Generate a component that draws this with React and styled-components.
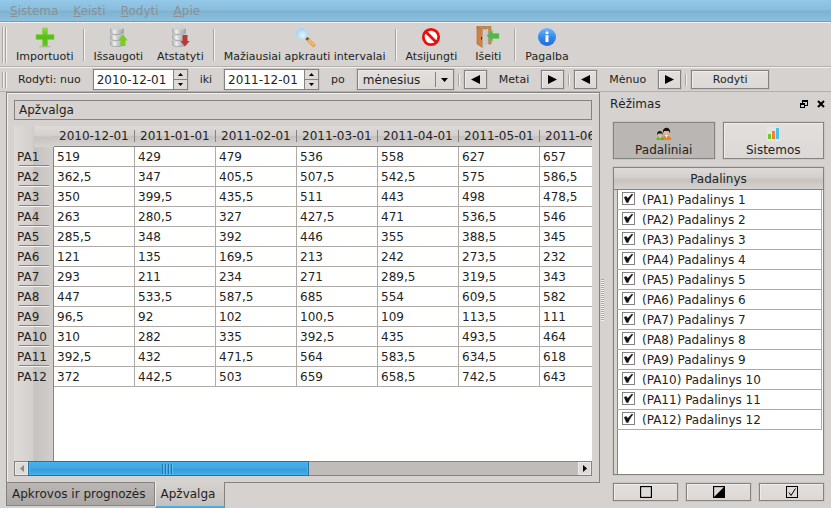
import React, { useState } from "react";
import styled, { createGlobalStyle, css } from "styled-components";

const GlobalStyle = createGlobalStyle`
  *, *::before, *::after { box-sizing: border-box; }
  body { margin: 0; background: #d6d2cf; }
  body, button, input, select, table {
    font-family: "DejaVu Sans", sans-serif;
    font-size: 12px;
    line-height: 16px;
    color: #221f1e;
  }
  button { margin: 0; padding: 0; }
`;

const Window = styled.div`
  min-height: 100vh;
  display: flex;
  flex-direction: column;
  overflow: hidden;
  background: #d6d2cf;
`;

const MenuBar = styled.nav`
  display: flex;
  gap: 15px;
  height: 22px;
  padding: 0 10px;
  background: linear-gradient(#93c8e9 0%, #89bddc 48%, #7fb2cf 52%, #8cc0df 100%);
  border-bottom: 1px solid #769caf;
`;

const MenuItem = styled.button`
  padding: 0;
  border: 0;
  background: none;
  color: #8b9094;
`;

const Toolbar = styled.div`
  display: flex;
  align-items: center;
  height: ${(p) => (p.$tall ? 45 : 25)}px;
  padding-left: 2px;
  border-top: 1px solid #f3f1f0;
  border-bottom: 1px solid #b3afac;
`;

const Grip = styled.span`
  width: 4px;
  height: ${(p) => (p.$tall ? 36 : 16)}px;
  margin-right: ${(p) => (p.$tall ? 3 : 12)}px;
  border: solid #a9a5a2;
  border-width: 0 1px;
  box-shadow: 1px 0 #f3f1f0, inset 1px 0 #f3f1f0;
`;

const Separator = styled.span`
  width: 2px;
  height: ${(p) => (p.$short ? 12 : 32)}px;
  margin: 0 ${(p) => (p.$short ? 4 : 2)}px;
  border-left: 1px solid #a9a5a2;
  border-right: 1px solid #f3f1f0;
`;

const ToolButton = styled.button`
  display: flex;
  flex-direction: column;
  align-items: center;
  gap: 1px;
  min-width: 48px;
  padding: 2px 7px 0;
  border: 0;
  background: none;
  font-size: 11px;
  white-space: nowrap;
  svg { display: block; }
`;

const FieldLabel = styled.label`
  font-size: 11px;
`;

const FieldText = styled.span`
  margin: 0 12px;
  font-size: 11px;
`;

const DateField = styled.span`
  display: flex;
  width: 95px;
  height: 21px;
  margin: 0 12px;
  border: 1px solid #858381;
  background: #fff;
  box-shadow: 0 0 0 1px #cac6c3;
`;

const DateInput = styled.input`
  flex: 1;
  min-width: 0;
  padding: 0 3px;
  border: 0;
  background: none;
  outline: 0;
`;

const Spinner = styled.span`
  display: flex;
  flex-direction: column;
  width: 14px;
  border-left: 1px solid #858381;
`;

const SpinButton = styled.button`
  flex: 1;
  display: flex;
  align-items: center;
  justify-content: center;
  border: 0;
  background: #dedad7;
  & + & { border-top: 1px solid #858381; }
`;

const raised = css`
  border: 1px solid #858381;
  background: linear-gradient(#e2dfdd, #dbd8d5);
  box-shadow: inset 1px 1px #efedec, 0 0 0 1px #cac6c3;
`;

const SelectBox = styled.span`
  ${raised}
  position: relative;
  display: flex;
  width: 97px;
  height: 21px;
  margin-left: 12px;
  svg { position: absolute; right: 5px; top: 8px; pointer-events: none; }
  &::after {
    content: "";
    position: absolute;
    right: 17px;
    top: 2px;
    bottom: 2px;
    border-left: 1px solid #858381;
  }
`;

const Select = styled.select`
  width: 100%;
  padding: 0 5px;
  border: 0;
  background: none;
  appearance: none;
`;

const PushButton = styled.button`
  ${raised}
  display: flex;
  align-items: center;
  justify-content: center;
  width: ${(p) => p.$width || 23}px;
  height: 19px;
  font-size: 11px;
`;

const Body = styled.main`
  flex: 1;
  display: flex;
`;

const Workspace = styled.section`
  flex: 1;
  min-width: 0;
  display: flex;
  flex-direction: column;
  padding-left: 6px;
`;

const Pane = styled.div`
  flex: 1;
  display: flex;
  flex-direction: column;
  padding: 7px 7px 6px;
  border: 1px solid #858381;
  box-shadow: inset 1px 1px #f1efee;
`;

const PaneTitle = styled.h1`
  margin: 0 0 6px;
  padding: 1px 4px;
  border: 1px solid #858381;
  font-size: 12px;
  font-weight: normal;
`;

const headerShade = "linear-gradient(#dedad8 0%, #d3cfcd 48%, #c6c2c0 52%, #d6d2cf 100%)";

const TableView = styled.div`
  flex: 1;
  min-height: 262px;
  overflow: hidden;
  background:
    linear-gradient(#858381, #858381) 39px 21px / 1px 100% no-repeat,
    ${headerShade} 20px 0 / 20px 21px no-repeat,
    linear-gradient(90deg, #dedad8 0%, #d3cfcd 48%, #c6c2c0 52%, #d2cecc 100%) 0 0 / 39px 100% no-repeat,
    #fff;
`;

const DataTable = styled.table`
  width: 607px;
  table-layout: fixed;
  border-spacing: 0;
  th, td { height: 20px; padding: 0; font-weight: normal; text-align: left; line-height: 18px; }
  thead th { height: 21px; }
`;

const Corner = styled.td`
  width: 40px;
`;

const ColumnHead = styled.th`
  background: ${headerShade};
  border-bottom: 1px solid #858381;
  span {
    display: block;
    height: 12px;
    padding-left: 5px;
    line-height: 12px;
    border-right: 1px solid #858381;
    box-shadow: 1px 0 #f3f1f0;
  }
`;

const RowHead = styled.th`
  span {
    display: block;
    height: 20px;
    margin: 0 5px 0 3px;
    line-height: 20px;
    background:
      linear-gradient(#858381 50%, #f3f1f0 50%) 2px 100% / 30px 2px no-repeat;
  }
  tr:last-child & span { background: none; }
`;

const Cell = styled.td`
  && { padding-left: 3px; }
  border-right: 1px solid #b0aaa7;
  border-bottom: 1px solid #b0aaa7;
`;

const ScrollBar = styled.div`
  display: flex;
  height: 15px;
  border: 1px solid #858381;
  background: #c0bcb9;
`;

const ScrollButton = styled.button`
  display: flex;
  align-items: center;
  justify-content: center;
  width: 13px;
  border: 1px solid #eceae8;
  background: #dedad7;
`;

const ScrollTrack = styled.div`
  flex: 1;
  display: flex;
`;

const ScrollThumb = styled.div`
  display: flex;
  align-items: center;
  justify-content: center;
  width: 51%;
  margin: -1px 0;
  border: 1px solid #24739f;
  background: linear-gradient(#46aeeb 0%, #41a8e4 48%, #389bd5 52%, #43aceb 100%);
  box-shadow: inset 0 0 0 1px #45b4f5;
`;

const ThumbGrip = styled.span`
  width: 12px;
  height: 10px;
  background: repeating-linear-gradient(90deg, #2675a3 0 1px, #57bdf5 1px 2px, transparent 2px 3px);
`;

const Tabs = styled.div`
  display: flex;
  align-items: flex-start;
  height: 25px;
`;

const Tab = styled.button`
  padding: 0 8px 0 5px;
  border: 1px solid #858381;
  border-top: 0;
  ${(p) =>
    p.$active
      ? css`
          height: 26px;
          margin-top: -1px;
          padding-right: 9px;
          border-left-color: #f1efee;
          border-bottom: 2px solid #3daee9;
          background: linear-gradient(#d6d2cf, #c4c0bd);
        `
      : css`
          height: 23px;
          background: linear-gradient(#bbb7b5, #aaa6a4);
        `}
`;

const Splitter = styled.div`
  display: flex;
  align-items: center;
  width: 5px;
  &::before {
    content: "";
    width: 3px;
    height: 42px;
    margin-left: 1px;
    background: repeating-linear-gradient(#aaa6a3 0 1px, #f5f3f2 1px 2px);
  }
`;

const Dock = styled.aside`
  flex: 0 0 226px;
  display: flex;
  flex-direction: column;
  padding: 4px 7px 7px 8px;
`;

const DockHead = styled.header`
  display: flex;
  align-items: center;
  gap: 9px;
  margin: 0 -1px 0 -3px;
`;

const DockTitle = styled.h2`
  flex: 1;
  margin: 0;
  font-size: 12px;
  font-weight: normal;
`;

const IconButton = styled.button`
  display: flex;
  border: 0;
  background: none;
`;

const ModeRow = styled.div`
  display: flex;
  gap: 8px;
  margin: 10px 0 8px;
`;

const ModeButton = styled.button`
  ${raised}
  flex: 1;
  display: flex;
  flex-direction: column;
  align-items: center;
  justify-content: flex-end;
  height: 37px;
  gap: 1px;
  ${(p) => p.$pressed && css`background: #bab6b3; box-shadow: 0 0 0 1px #cac6c3;`}
`;

const UnitList = styled.div`
  flex: 1;
  padding: 0 1px 1px 3px;
  border: 1px solid #858381;
  box-shadow: 0 0 0 1px #cac6c3;
  background: linear-gradient(90deg, #d6d2cf 3px, #858381 3px 4px, #fff 4px);
`;

const UnitHead = styled.div`
  height: 22px;
  margin: 0 -1px 0 -3px;
  line-height: 23px;
  text-align: center;
  background: ${headerShade};
  border-bottom: 1px solid #858381;
`;

const UnitRow = styled.label`
  display: flex;
  align-items: center;
  gap: 7px;
  height: 20px;
  padding-left: 5px;
  border-right: 1px solid #b0aaa7;
  border-bottom: 1px solid #b0aaa7;
`;

const CheckBox = styled.input`
  appearance: none;
  width: 13px;
  height: 13px;
  margin: 0 0 2px;
  border: 1px solid #858381;
  background: #fff;
  &:checked {
    background: #fff
      url("data:image/svg+xml,%3Csvg xmlns='http://www.w3.org/2000/svg' viewBox='0 0 11 11'%3E%3Cpath d='M1.200 4.200L3.400 3.400L4.700 5.600L8.800 1L10 1.600C7.800 4 6.500 6.500 5.200 9.600L3.500 9.600Z' fill='%23111' stroke='%23111' stroke-width='.4'/%3E%3C/svg%3E")
      center / 11px 11px;
  }
`;

const SelectionRow = styled.div`
  display: flex;
  gap: 8px;
  margin-top: 8px;
`;

const SelectionButton = styled.button`
  ${raised}
  flex: 1;
  display: flex;
  align-items: center;
  justify-content: center;
  height: 18px;
`;

const Arrow = ({ dir, w, h, color = "#000" }) => {
  const d = {
    left: `M${w} 0V${h}L0 ${h / 2}Z`,
    right: `M0 0V${h}L${w} ${h / 2}Z`,
    up: `M0 ${h}H${w}L${w / 2} 0Z`,
    down: `M0 0H${w}L${w / 2} ${h}Z`,
  }[dir];
  return <svg width={w} height={h} aria-hidden="true"><path d={d} fill={color} /></svg>;
};

const ImportIcon = () => (
  <svg width="22" height="22" viewBox="0 0 22 22">
    <defs><linearGradient id="plus" x2="0" y2="1"><stop stopColor="#8ed84a" /><stop offset=".5" stopColor="#55bd15" /><stop offset="1" stopColor="#66c81f" /></linearGradient></defs>
    <ellipse cx="11" cy="20.500" rx="6" ry="1" fill="#bab7b4" />
    <path d="M8.500 2h5v6.500h6.500v5h-6.500V20h-5v-6.500H2v-5h6.500z" fill="url(#plus)" stroke="#7fd43b" strokeWidth=".6" />
  </svg>
);

const DatabaseIcon = ({ id, restore }) => (
  <svg width="22" height="22" viewBox="0 0 22 22">
    <defs><linearGradient id={id}><stop stopColor="#a4a6a6" /><stop offset=".3" stopColor="#f0f1f1" /><stop offset=".6" stopColor="#c3c5c5" /><stop offset="1" stopColor="#a0a2a2" /></linearGradient></defs>
    {[14, 8, 2].map((y) => (
      <g key={y}>
        <path d={`M3 ${y}v4.500c1 2.500 13 2.500 14 0v-4.500z`} fill={`url(#${id})`} />
        <path d={`M3.500 ${y + 5}c2 2 11 2 13 0`} fill="none" stroke="#8d9090" strokeWidth=".6" />
        <ellipse cx="10" cy={y} rx="7" ry="1.700" fill="#cfd1d1" />
      </g>
    ))}
    {restore
      ? <path d="M13.500 9h5v6h2.200L16 20.500 11.300 15h2.200z" fill="#b9383b" />
      : <path d="M13.500 20h5v-5.500h2.200L16 8.500l-4.700 6h2.200z" fill="#7ace22" />}
  </svg>
);

const SearchIcon = () => (
  <svg width="22" height="22" viewBox="0 0 22 22">
    <defs><radialGradient id="lens" cx=".6" cy=".65"><stop stopColor="#e8f6ff" /><stop offset="1" stopColor="#a6d6f8" /></radialGradient></defs>
    <path d="M11.500 13l2-2 2.500 2.500-2 2z" fill="#44484a" />
    <path d="M13 14.500l2-2 6 6c1 1-1.500 3-2.500 2z" fill="#f0a544" stroke="#d99743" strokeWidth=".6" />
    <circle cx="7.500" cy="7.500" r="6" fill="url(#lens)" stroke="#cbd8df" strokeWidth="1" />
    <path d="M14.500 14l5 5" stroke="#ffd58a" strokeWidth="1" />
  </svg>
);

const DisconnectIcon = () => (
  <svg width="22" height="22" viewBox="0 0 22 22">
    <circle cx="11" cy="11" r="7.700" fill="#fff" stroke="#ec0f0b" strokeWidth="2.800" />
    <path d="M5.500 5.500l11 11" stroke="#e01511" strokeWidth="2.800" />
  </svg>
);

const ExitIcon = () => (
  <svg width="24" height="22" viewBox="0 0 24 22">
    <path d="M1 .5h14v17.500h-2.500V3H1z" fill="#cd8a50" stroke="#a06a38" strokeWidth=".6" />
    <path d="M5 3h7.500v15H5z" fill="#a7acab" />
    <path d="M5.500 3.500h4v16h-4z" fill="#bfc4c3" />
    <path d="M1 .8l5.500 3.700V21.500L1 18z" fill="#cf8241" stroke="#a5672f" strokeWidth=".6" />
    <path d="M6.500 21.500V5l5.500-2.500V18z" fill="#cdd0cf" fillOpacity=".8" />
    <path d="M5.500 11v2.500" stroke="#40260f" />
    <path d="M11 9.500L16.500 4.500v3H23v5h-6.500v3z" fill="#4fb845" stroke="#6fc763" strokeWidth=".5" />
  </svg>
);

const HelpIcon = () => (
  <svg width="22" height="22" viewBox="0 0 22 22">
    <defs><linearGradient id="help" x2="0" y2="1"><stop stopColor="#70b7ff" /><stop offset=".5" stopColor="#328bea" /><stop offset="1" stopColor="#2567df" /></linearGradient></defs>
    <circle cx="11" cy="11" r="9" fill="url(#help)" />
    <circle cx="11" cy="6.700" r="1.500" fill="#fff" />
    <path d="M9.500 9.200h3v6.800h-3z" fill="#fff" />
  </svg>
);

const PeopleIcon = () => (
  <svg width="16" height="14" viewBox="0 0 16 14">
    <path d="M6 13c0-6 9-6 9.500 0z" fill="#f28123" />
    <path d="M9 8l1.500 3L12 8z" fill="#fff" />
    <circle cx="10.500" cy="5" r="2.600" fill="#e9b88c" />
    <path d="M7 6C5.500-1 15.500-1 14 6l-1.300-2-4.500 0z" fill="#171310" />
    <path d="M.5 13c0-5 7-5 7.500 0z" fill="#64b62c" />
    <path d="M3 9.500l1 2 1.300-2z" fill="#fff" />
    <circle cx="4" cy="7.500" r="2" fill="#e9b88c" />
    <path d="M1.300 8C0 2.500 7.500 2.500 6.500 8L5.500 6.500H2.500z" fill="#171310" />
  </svg>
);

const BarsIcon = () => (
  <svg width="14" height="14" viewBox="0 0 14 14">
    <path d="M1 0h13v14H1z" fill="#e6e5e3" />
    <rect x="2" y="7" width="3" height="5" fill="#6fcb2a" />
    <rect x="6" y="4" width="3" height="8" fill="#f5822a" />
    <rect x="10" y="1" width="3" height="11" fill="#47c3f0" />
  </svg>
);

const FloatIcon = () => (
  <svg width="8" height="8" viewBox="0 0 8 8" shapeRendering="crispEdges">
    <path d="M2 0h6v6H5V5h2V2H3v1H2z" fill="#000" />
    <path d="M0 3h5v5H0zM1 5v2h3V5z" fillRule="evenodd" fill="#000" />
  </svg>
);

const CloseIcon = () => (
  <svg width="8" height="8" viewBox="0 0 8 8"><path d="M1 1l6 6M7 1L1 7" stroke="#000" strokeWidth="2" /></svg>
);

const BoxIcon = ({ kind }) => (
  <svg width="12" height="12" viewBox="0 0 12 12">
    <rect x=".5" y=".5" width="11" height="11" fill="#dedad7" stroke="#000" strokeWidth={kind === "all" ? 1 : 1.300} />
    {kind === "invert" && <path d="M12 0v12H0z" fill="#000" />}
    {kind === "all" && <path d="M3 6.500l2 3 4.500-7" fill="none" stroke="#000" strokeWidth="1" />}
  </svg>
);

const months = ["2010-12-01", "2011-01-01", "2011-02-01", "2011-03-01", "2011-04-01", "2011-05-01", "2011-06-01"];

const loads = [
  ["519", "429", "479", "536", "558", "627", "657"],
  ["362,5", "347", "405,5", "507,5", "542,5", "575", "586,5"],
  ["350", "399,5", "435,5", "511", "443", "498", "478,5"],
  ["263", "280,5", "327", "427,5", "471", "536,5", "546"],
  ["285,5", "348", "392", "446", "355", "388,5", "345"],
  ["121", "135", "169,5", "213", "242", "273,5", "232"],
  ["293", "211", "234", "271", "289,5", "319,5", "343"],
  ["447", "533,5", "587,5", "685", "554", "609,5", "582"],
  ["96,5", "92", "102", "100,5", "109", "113,5", "111"],
  ["310", "282", "335", "392,5", "435", "493,5", "464"],
  ["392,5", "432", "471,5", "564", "583,5", "634,5", "618"],
  ["372", "442,5", "503", "659", "658,5", "742,5", "643"],
];

const DateSpin = ({ id, value }) => (
  <DateField>
    <DateInput id={id} defaultValue={value} />
    <Spinner>
      <SpinButton aria-label="Didinti"><Arrow dir="up" w={5} h={3} /></SpinButton>
      <SpinButton aria-label="Mažinti"><Arrow dir="down" w={5} h={3} /></SpinButton>
    </Spinner>
  </DateField>
);

const Stepper = ({ children }) => (
  <>
    <PushButton aria-label={`${children} atgal`}><Arrow dir="left" w={9} h={9} /></PushButton>
    <FieldText>{children}</FieldText>
    <PushButton aria-label={`${children} pirmyn`}><Arrow dir="right" w={9} h={9} /></PushButton>
  </>
);

export default function App() {
  const [mode, setMode] = useState("units");
  const [tab, setTab] = useState("overview");

  return (
    <Window>
      <GlobalStyle />
      <MenuBar>
        {["Sistema", "Keisti", "Rodyti", "Apie"].map((m) => (
          <MenuItem key={m}><u>{m[0]}</u>{m.slice(1)}</MenuItem>
        ))}
      </MenuBar>
      <Toolbar $tall>
        <Grip $tall />
        <ToolButton><ImportIcon />Importuoti</ToolButton>
        <Separator />
        <ToolButton><DatabaseIcon id="db-save" />Išsaugoti</ToolButton>
        <ToolButton><DatabaseIcon id="db-restore" restore />Atstatyti</ToolButton>
        <Separator />
        <ToolButton><SearchIcon />Mažiausiai apkrauti intervalai</ToolButton>
        <Separator />
        <ToolButton><DisconnectIcon />Atsijungti</ToolButton>
        <ToolButton><ExitIcon />Išeiti</ToolButton>
        <Separator />
        <ToolButton><HelpIcon />Pagalba</ToolButton>
      </Toolbar>
      <Toolbar>
        <Grip />
        <FieldLabel htmlFor="from">Rodyti: nuo</FieldLabel>
        <DateSpin id="from" value="2010-12-01" />
        <FieldLabel htmlFor="to">iki</FieldLabel>
        <DateSpin id="to" value="2011-12-01" />
        <FieldLabel htmlFor="step">po</FieldLabel>
        <SelectBox>
          <Select id="step"><option>mėnesius</option></Select>
          <Arrow dir="down" w={7} h={4} />
        </SelectBox>
        <Separator $short />
        <Stepper>Metai</Stepper>
        <Separator $short />
        <Stepper>Mėnuo</Stepper>
        <Separator $short />
        <PushButton $width={78}>Rodyti</PushButton>
      </Toolbar>
      <Body>
        <Workspace>
          <Pane>
            <PaneTitle>Apžvalga</PaneTitle>
            <TableView>
              <DataTable>
                <thead>
                  <tr>
                    <Corner />
                    {months.map((m) => <ColumnHead key={m} scope="col"><span>{m}</span></ColumnHead>)}
                  </tr>
                </thead>
                <tbody>
                  {loads.map((row, i) => (
                    <tr key={i}>
                      <RowHead scope="row"><span>PA{i + 1}</span></RowHead>
                      {row.map((v, j) => <Cell key={j}>{v}</Cell>)}
                    </tr>
                  ))}
                </tbody>
              </DataTable>
            </TableView>
            <ScrollBar>
              <ScrollButton aria-label="Kairėn"><Arrow dir="left" w={4} h={7} color="#8b8885" /></ScrollButton>
              <ScrollTrack><ScrollThumb><ThumbGrip /></ScrollThumb></ScrollTrack>
              <ScrollButton aria-label="Dešinėn"><Arrow dir="right" w={4} h={7} /></ScrollButton>
            </ScrollBar>
          </Pane>
          <Tabs role="tablist">
            <Tab role="tab" aria-selected={tab === "forecast"} $active={tab === "forecast"} onClick={() => setTab("forecast")}>Apkrovos ir prognozės</Tab>
            <Tab role="tab" aria-selected={tab === "overview"} $active={tab === "overview"} onClick={() => setTab("overview")}>Apžvalga</Tab>
          </Tabs>
        </Workspace>
        <Splitter />
        <Dock>
          <DockHead>
            <DockTitle>Rėžimas</DockTitle>
            <IconButton aria-label="Atskirti"><FloatIcon /></IconButton>
            <IconButton aria-label="Uždaryti"><CloseIcon /></IconButton>
          </DockHead>
          <ModeRow>
            <ModeButton aria-pressed={mode === "units"} $pressed={mode === "units"} onClick={() => setMode("units")}><PeopleIcon />Padaliniai</ModeButton>
            <ModeButton aria-pressed={mode === "systems"} $pressed={mode === "systems"} onClick={() => setMode("systems")}><BarsIcon />Sistemos</ModeButton>
          </ModeRow>
          <UnitList>
            <UnitHead>Padalinys</UnitHead>
            {loads.map((_, i) => (
              <UnitRow key={i}>
                <CheckBox type="checkbox" defaultChecked />
                (PA{i + 1}) Padalinys {i + 1}
              </UnitRow>
            ))}
          </UnitList>
          <SelectionRow>
            <SelectionButton aria-label="Nežymėti nieko"><BoxIcon kind="none" /></SelectionButton>
            <SelectionButton aria-label="Apversti žymėjimą"><BoxIcon kind="invert" /></SelectionButton>
            <SelectionButton aria-label="Žymėti viską"><BoxIcon kind="all" /></SelectionButton>
          </SelectionRow>
        </Dock>
      </Body>
    </Window>
  );
}
